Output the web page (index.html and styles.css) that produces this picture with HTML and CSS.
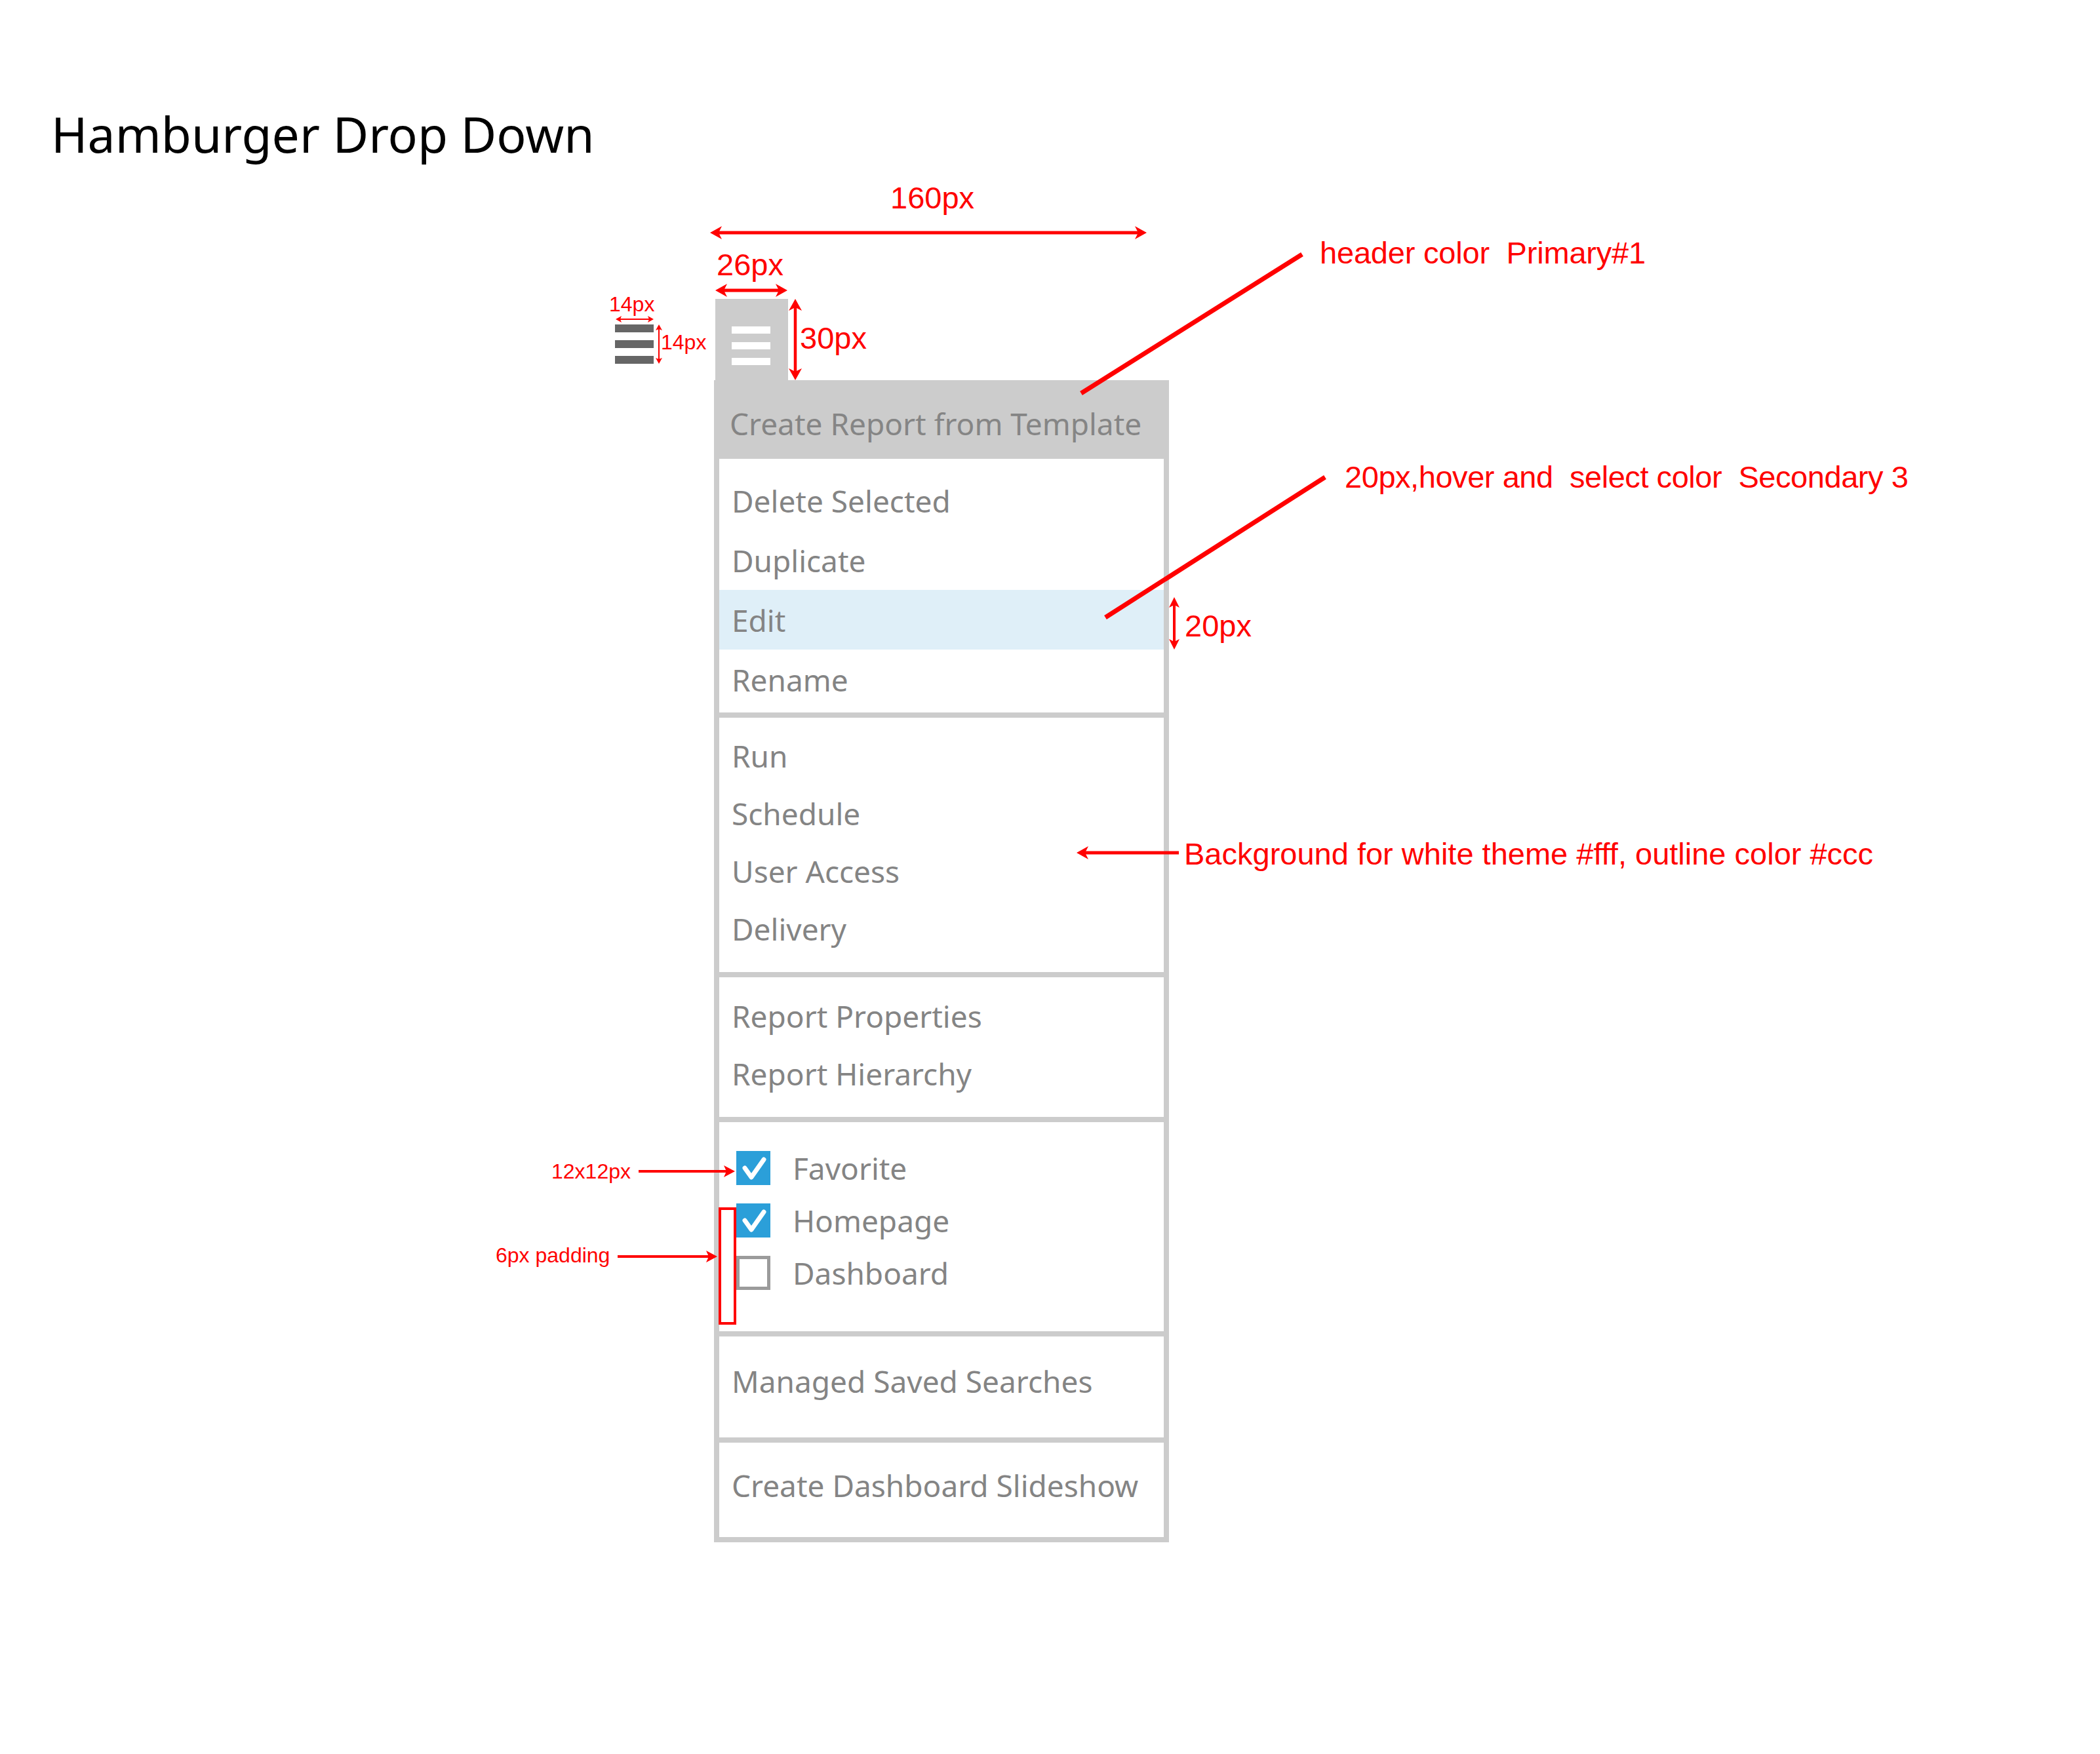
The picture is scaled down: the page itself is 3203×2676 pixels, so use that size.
FILE: index.html
```html
<!DOCTYPE html>
<html lang="en">
<head>
<meta charset="utf-8">
<title>Hamburger Drop Down</title>
<link rel="stylesheet" href="styles.css">
</head>
<body>
<div class="page">
  <h1 class="title">Hamburger Drop Down</h1>

  <div class="stage">
    <div class="tab-row">
      <span class="burger-sm"><i></i><i></i><i></i></span>
      <div class="tab"><i></i><i></i><i></i></div>
    </div>

    <div class="menu">
      <div class="menu-head">Create Report from Template</div>
      <div class="menu-body">
        <ul class="group g1">
          <li class="item">Delete Selected</li>
          <li class="item">Duplicate</li>
          <li class="item is-active">Edit</li>
          <li class="item">Rename</li>
        </ul>
        <ul class="group g2">
          <li class="item">Run</li>
          <li class="item">Schedule</li>
          <li class="item">User Access</li>
          <li class="item">Delivery</li>
        </ul>
        <ul class="group g3">
          <li class="item">Report Properties</li>
          <li class="item">Report Hierarchy</li>
        </ul>
        <ul class="group g4">
          <li class="item check"><span class="box on"><svg viewBox="0 0 52 52"><path d="M13 26 L23 40 L42 13"/></svg></span>Favorite</li>
          <li class="item check"><span class="box on"><svg viewBox="0 0 52 52"><path d="M13 26 L23 40 L42 13"/></svg></span>Homepage</li>
          <li class="item check"><span class="box"></span>Dashboard</li>
        </ul>
        <ul class="group g5">
          <li class="item">Managed Saved Searches</li>
        </ul>
        <ul class="group g6">
          <li class="item">Create Dashboard Slideshow</li>
        </ul>
      </div>
    </div>
  </div>

  <svg class="marks" viewBox="0 0 3203 2676" width="3203" height="2676">
    <g stroke="#ff0000" fill="none">
      <line x1="1090" y1="355" x2="1742" y2="355" stroke-width="5"/>
      <line x1="1098" y1="443" x2="1194" y2="443" stroke-width="5"/>
      <line x1="1213" y1="462" x2="1213" y2="574" stroke-width="4.5"/>
      <line x1="943" y1="487" x2="993" y2="487" stroke-width="2"/>
      <line x1="1005" y1="499" x2="1005" y2="551" stroke-width="2"/>
      <line x1="1791" y1="917" x2="1791" y2="985" stroke-width="4"/>
      <line x1="1650" y1="1301" x2="1798" y2="1301" stroke-width="5"/>
      <line x1="974" y1="1787" x2="1112" y2="1787" stroke-width="4"/>
      <line x1="942" y1="1917" x2="1085" y2="1917" stroke-width="4"/>
      <line x1="1986" y1="388" x2="1649" y2="600" stroke-width="7"/>
      <line x1="2021" y1="728" x2="1686" y2="942" stroke-width="7"/>
      <rect x="1098" y="1844" width="23" height="175" stroke-width="4"/>
    </g>
    <g fill="#ff0000">
      <polygon points="1083,355 1101,345 1096,355 1101,365"/>
      <polygon points="1749,355 1731,345 1736,355 1731,365"/>
      <polygon points="1091,443 1109,433 1104,443 1109,453"/>
      <polygon points="1201,443 1183,433 1188,443 1183,453"/>
      <polygon points="1213,456 1203,474 1213,469 1223,474"/>
      <polygon points="1213,580 1203,562 1213,567 1223,562"/>
      <polygon points="939,487 948,482 946,487 948,492"/>
      <polygon points="997,487 988,482 990,487 988,492"/>
      <polygon points="1005,495 1000,504 1005,502 1010,504"/>
      <polygon points="1005,555 1000,546 1005,548 1010,546"/>
      <polygon points="1791,911 1783,927 1791,923 1799,927"/>
      <polygon points="1791,991 1783,975 1791,979 1799,975"/>
      <polygon points="1642,1301 1660,1291 1655,1301 1660,1311"/>
      <polygon points="1121,1787 1104,1778 1108,1787 1104,1796"/>
      <polygon points="1094,1917 1077,1908 1081,1917 1077,1926"/>
    </g>
  </svg>

  <span class="note big n-160">160px</span>
  <span class="note big n-26">26px</span>
  <span class="note big n-30">30px</span>
  <span class="note small n-14a">14px</span>
  <span class="note small n-14b">14px</span>
  <span class="note big n-header">header color&nbsp; Primary#1</span>
  <span class="note big n-hover">20px,hover and&nbsp; select color&nbsp; Secondary 3</span>
  <span class="note big n-20">20px</span>
  <span class="note big n-bg">Background for white theme #fff, outline color #ccc</span>
  <span class="note small n-12">12x12px</span>
  <span class="note small n-6">6px padding</span>
</div>
</body>
</html>
```

FILE: styles.css
```css
html, body {
  margin: 0;
  padding: 0;
  background: #ffffff;
}

.page {
  position: relative;
  width: 3203px;
  height: 2676px;
  box-sizing: border-box;
  padding: 167px 0 0 78px;
  font-family: "Noto Sans", "Open Sans", sans-serif;
}

.title {
  margin: 0;
  font-family: "Noto Sans", "Open Sans", sans-serif;
  font-weight: 400;
  font-size: 75px;
  line-height: 1;
  color: #000000;
}

.stage {
  margin-top: 214px;
  margin-left: 860px;
}

.tab-row {
  display: flex;
  align-items: flex-start;
  gap: 94px;
}

.burger-sm {
  display: flex;
  flex-direction: column;
  gap: 12px;
  margin-top: 39px;
}

.burger-sm i {
  display: block;
  width: 59px;
  height: 12px;
  background: #666666;
}

.tab {
  width: 111px;
  height: 124px;
  box-sizing: border-box;
  padding: 42px 0 0 25px;
  background: #cccccc;
  display: flex;
  flex-direction: column;
  gap: 13px;
}

.tab i {
  display: block;
  width: 59px;
  height: 11px;
  background: #ffffff;
}

.menu {
  margin-left: 151px;
  width: 694px;
}

.menu-head {
  height: 120px;
  box-sizing: border-box;
  padding: 12px 0 0 24px;
  background: #cccccc;
  color: #858585;
  font-size: 46px;
  display: flex;
  align-items: center;
  white-space: nowrap;
}

.menu-body {
  border: 8px solid #cccccc;
  border-top: 0;
  background: #ffffff;
}

.group {
  list-style: none;
  margin: 0;
  padding: 0;
}

.group + .group {
  border-top: 8px solid #cccccc;
}

.g1 { padding: 18px 0 5px; }
.g1 .item { height: 91px; }
.g2 { padding: 14px 0 22px; }
.g3 { padding: 15px 0 22px; }
.g4 { padding: 30px 0 49px; }
.g5 { padding: 24px 0 42px; }
.g6 { padding: 21px 0 35px; }

.item {
  height: 88px;
  box-sizing: border-box;
  padding-left: 19px;
  display: flex;
  align-items: center;
  font-size: 46px;
  color: #848484;
  white-space: nowrap;
}

.item.is-active {
  background: #dfeff8;
}

.item.check {
  height: 80px;
  padding-left: 26px;
  gap: 34px;
}

.box {
  flex: none;
  width: 52px;
  height: 52px;
  box-sizing: border-box;
  border: 5px solid #9b9b9b;
  background: #ffffff;
}

.box.on {
  border: 0;
  background: #2b9fd9;
}

.box svg {
  display: block;
  width: 52px;
  height: 52px;
}

.box svg path {
  fill: none;
  stroke: #ffffff;
  stroke-width: 7;
  stroke-linecap: round;
  stroke-linejoin: round;
}

.marks {
  position: absolute;
  left: 0;
  top: 0;
  pointer-events: none;
}

.note {
  position: absolute;
  font-family: "Liberation Sans", Arial, sans-serif;
  line-height: 1;
  color: #ff0000;
  white-space: nowrap;
}

.note.big { font-size: 47px; }
.note.small { font-size: 32px; }

.n-160 { left: 1358px; top: 278px; }
.n-26 { left: 1093px; top: 380px; }
.n-30 { left: 1220px; top: 492px; }
.n-14a { left: 929px; top: 448px; }
.n-14b { left: 1008px; top: 506px; }
.n-header { left: 2013px; top: 362px; letter-spacing: -0.2px; }
.n-hover { left: 2051px; top: 704px; letter-spacing: -0.45px; }
.n-20 { left: 1807px; top: 931px; }
.n-bg { left: 1806px; top: 1279px; }
.n-12 { left: 841px; top: 1771px; }
.n-6 { left: 756px; top: 1899px; }
```
